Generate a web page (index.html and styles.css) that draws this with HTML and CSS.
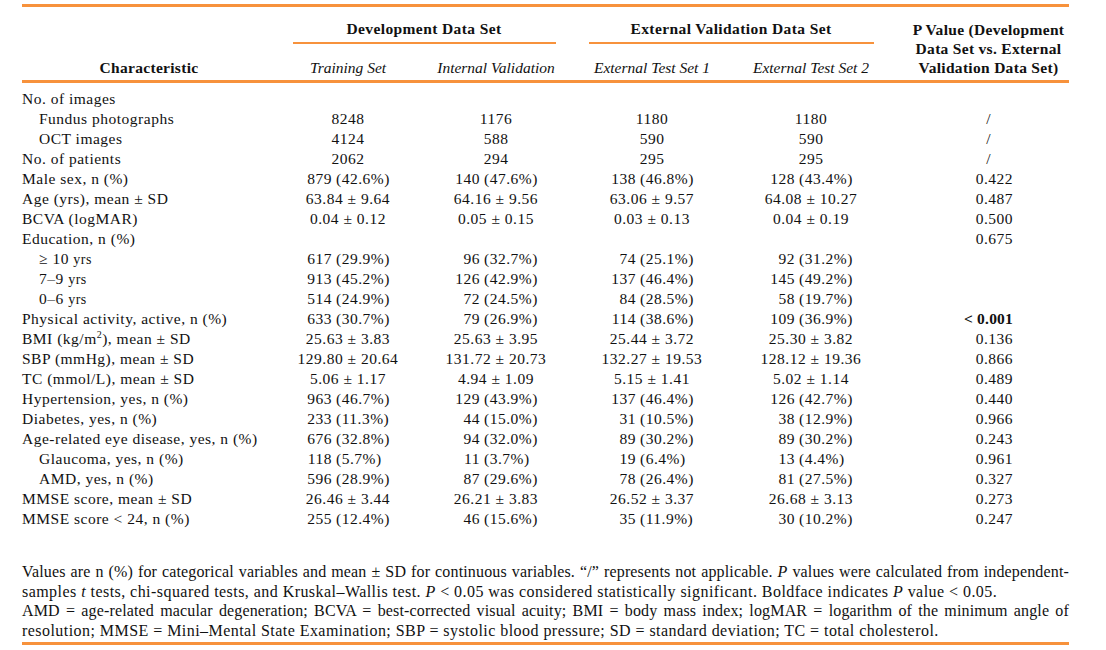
FILE: index.html
```html
<!DOCTYPE html>
<html lang="en">
<head>
<meta charset="utf-8">
<title>Table</title>
<link rel="stylesheet" href="styles.css">
</head>
<body>
<div class="page">
  <div class="thead">
    <div class="h-char">Characteristic</div>
    <div class="h-group g-dev"><div class="h-title">Development Data Set</div><div class="h-rule"></div></div>
    <div class="h-group g-ext"><div class="h-title">External Validation Data Set</div><div class="h-rule"></div></div>
    <div class="h-p">P Value (Development<br>Data Set vs. External<br>Validation Data Set)</div>
    <div class="h-sub s1">Training Set</div>
    <div class="h-sub s2">Internal Validation</div>
    <div class="h-sub s3">External Test Set 1</div>
    <div class="h-sub s4">External Test Set 2</div>
  </div>

  <div class="tbody">
    <div class="row"><div class="lab">No. of images</div><div></div><div></div><div></div><div></div><div></div></div>
    <div class="row"><div class="lab ind">Fundus photographs</div><div class="c">8248</div><div class="c">1176</div><div class="c">1180</div><div class="c">1180</div><div class="na">/</div></div>
    <div class="row"><div class="lab ind">OCT images</div><div class="c">4124</div><div class="c">588</div><div class="c">590</div><div class="c">590</div><div class="na">/</div></div>
    <div class="row"><div class="lab">No. of patients</div><div class="c">2062</div><div class="c">294</div><div class="c">295</div><div class="c">295</div><div class="na">/</div></div>
    <div class="row"><div class="lab">Male sex, n (%)</div>
      <div class="c"><span class="np"><span class="n">879</span><span class="p">(42.6%)</span></span></div>
      <div class="c"><span class="np"><span class="n">140</span><span class="p">(47.6%)</span></span></div>
      <div class="c"><span class="np"><span class="n">138</span><span class="p">(46.8%)</span></span></div>
      <div class="c"><span class="np"><span class="n">128</span><span class="p">(43.4%)</span></span></div>
      <div class="pv">0.422</div></div>
    <div class="row"><div class="lab">Age (yrs), mean ± SD</div><div class="c">63.84 ± 9.64</div><div class="c">64.16 ± 9.56</div><div class="c">63.06 ± 9.57</div><div class="c">64.08 ± 10.27</div><div class="pv">0.487</div></div>
    <div class="row"><div class="lab">BCVA (logMAR)</div><div class="c">0.04 ± 0.12</div><div class="c">0.05 ± 0.15</div><div class="c">0.03 ± 0.13</div><div class="c">0.04 ± 0.19</div><div class="pv">0.500</div></div>
    <div class="row"><div class="lab">Education, n (%)</div><div></div><div></div><div></div><div></div><div class="pv">0.675</div></div>
    <div class="row"><div class="lab ind">≥ 10 <span class="yrs">yrs</span></div>
      <div class="c"><span class="np"><span class="n">617</span><span class="p">(29.9%)</span></span></div>
      <div class="c"><span class="np"><span class="n">96</span><span class="p">(32.7%)</span></span></div>
      <div class="c"><span class="np"><span class="n">74</span><span class="p">(25.1%)</span></span></div>
      <div class="c"><span class="np"><span class="n">92</span><span class="p">(31.2%)</span></span></div>
      <div></div></div>
    <div class="row"><div class="lab ind">7–9 <span class="yrs">yrs</span></div>
      <div class="c"><span class="np"><span class="n">913</span><span class="p">(45.2%)</span></span></div>
      <div class="c"><span class="np"><span class="n">126</span><span class="p">(42.9%)</span></span></div>
      <div class="c"><span class="np"><span class="n">137</span><span class="p">(46.4%)</span></span></div>
      <div class="c"><span class="np"><span class="n">145</span><span class="p">(49.2%)</span></span></div>
      <div></div></div>
    <div class="row"><div class="lab ind">0–6 <span class="yrs">yrs</span></div>
      <div class="c"><span class="np"><span class="n">514</span><span class="p">(24.9%)</span></span></div>
      <div class="c"><span class="np"><span class="n">72</span><span class="p">(24.5%)</span></span></div>
      <div class="c"><span class="np"><span class="n">84</span><span class="p">(28.5%)</span></span></div>
      <div class="c"><span class="np"><span class="n">58</span><span class="p">(19.7%)</span></span></div>
      <div></div></div>
    <div class="row"><div class="lab">Physical activity, active, n (%)</div>
      <div class="c"><span class="np"><span class="n">633</span><span class="p">(30.7%)</span></span></div>
      <div class="c"><span class="np"><span class="n">79</span><span class="p">(26.9%)</span></span></div>
      <div class="c"><span class="np"><span class="n">114</span><span class="p">(38.6%)</span></span></div>
      <div class="c"><span class="np"><span class="n">109</span><span class="p">(36.9%)</span></span></div>
      <div class="pv sig">&lt; 0.001</div></div>
    <div class="row"><div class="lab">BMI (kg/m<sup>2</sup>), mean ± SD</div><div class="c">25.63 ± 3.83</div><div class="c">25.63 ± 3.95</div><div class="c">25.44 ± 3.72</div><div class="c">25.30 ± 3.82</div><div class="pv">0.136</div></div>
    <div class="row"><div class="lab">SBP (mmHg), mean ± SD</div><div class="c">129.80 ± 20.64</div><div class="c">131.72 ± 20.73</div><div class="c">132.27 ± 19.53</div><div class="c">128.12 ± 19.36</div><div class="pv">0.866</div></div>
    <div class="row"><div class="lab">TC (mmol/L), mean ± SD</div><div class="c">5.06 ± 1.17</div><div class="c">4.94 ± 1.09</div><div class="c">5.15 ± 1.41</div><div class="c">5.02 ± 1.14</div><div class="pv">0.489</div></div>
    <div class="row"><div class="lab">Hypertension, yes, n (%)</div>
      <div class="c"><span class="np"><span class="n">963</span><span class="p">(46.7%)</span></span></div>
      <div class="c"><span class="np"><span class="n">129</span><span class="p">(43.9%)</span></span></div>
      <div class="c"><span class="np"><span class="n">137</span><span class="p">(46.4%)</span></span></div>
      <div class="c"><span class="np"><span class="n">126</span><span class="p">(42.7%)</span></span></div>
      <div class="pv">0.440</div></div>
    <div class="row"><div class="lab">Diabetes, yes, n (%)</div>
      <div class="c"><span class="np"><span class="n">233</span><span class="p">(11.3%)</span></span></div>
      <div class="c"><span class="np"><span class="n">44</span><span class="p">(15.0%)</span></span></div>
      <div class="c"><span class="np"><span class="n">31</span><span class="p">(10.5%)</span></span></div>
      <div class="c"><span class="np"><span class="n">38</span><span class="p">(12.9%)</span></span></div>
      <div class="pv">0.966</div></div>
    <div class="row"><div class="lab">Age-related eye disease, yes, n (%)</div>
      <div class="c"><span class="np"><span class="n">676</span><span class="p">(32.8%)</span></span></div>
      <div class="c"><span class="np"><span class="n">94</span><span class="p">(32.0%)</span></span></div>
      <div class="c"><span class="np"><span class="n">89</span><span class="p">(30.2%)</span></span></div>
      <div class="c"><span class="np"><span class="n">89</span><span class="p">(30.2%)</span></span></div>
      <div class="pv">0.243</div></div>
    <div class="row"><div class="lab ind">Glaucoma, yes, n (%)</div>
      <div class="c"><span class="np"><span class="n">118</span><span class="p">(5.7%)</span></span></div>
      <div class="c"><span class="np"><span class="n">11</span><span class="p">(3.7%)</span></span></div>
      <div class="c"><span class="np"><span class="n">19</span><span class="p">(6.4%)</span></span></div>
      <div class="c"><span class="np"><span class="n">13</span><span class="p">(4.4%)</span></span></div>
      <div class="pv">0.961</div></div>
    <div class="row"><div class="lab ind">AMD, yes, n (%)</div>
      <div class="c"><span class="np"><span class="n">596</span><span class="p">(28.9%)</span></span></div>
      <div class="c"><span class="np"><span class="n">87</span><span class="p">(29.6%)</span></span></div>
      <div class="c"><span class="np"><span class="n">78</span><span class="p">(26.4%)</span></span></div>
      <div class="c"><span class="np"><span class="n">81</span><span class="p">(27.5%)</span></span></div>
      <div class="pv">0.327</div></div>
    <div class="row"><div class="lab">MMSE score, mean ± SD</div><div class="c">26.46 ± 3.44</div><div class="c">26.21 ± 3.83</div><div class="c">26.52 ± 3.37</div><div class="c">26.68 ± 3.13</div><div class="pv">0.273</div></div>
    <div class="row"><div class="lab">MMSE score &lt; 24, n (%)</div>
      <div class="c"><span class="np"><span class="n">255</span><span class="p">(12.4%)</span></span></div>
      <div class="c"><span class="np"><span class="n">46</span><span class="p">(15.6%)</span></span></div>
      <div class="c"><span class="np"><span class="n">35</span><span class="p">(11.9%)</span></span></div>
      <div class="c"><span class="np"><span class="n">30</span><span class="p">(10.2%)</span></span></div>
      <div class="pv">0.247</div></div>
  </div>

  <div class="notes">
    <div class="line full">Values are n (%) for categorical variables and mean ± SD for continuous variables. “/” represents not applicable. <i>P</i> values were calculated from independent-</div>
    <div class="line">samples <i>t</i> tests, chi-squared tests, and Kruskal–Wallis test. <i>P</i> &lt; 0.05 was considered statistically significant. Boldface indicates <i>P</i> value &lt; 0.05.</div>
    <div class="line full">AMD = age-related macular degeneration; BCVA = best-corrected visual acuity; BMI = body mass index; logMAR = logarithm of the minimum angle of</div>
    <div class="line">resolution; MMSE = Mini–Mental State Examination; SBP = systolic blood pressure; SD = standard deviation; TC = total cholesterol.</div>
  </div>
</div>
</body>
</html>
```

FILE: styles.css
```css
html, body {
  margin: 0;
  padding: 0;
  background: #ffffff;
}

body {
  font-family: "Liberation Serif", "Times New Roman", serif;
  font-size: 15.5px;
  letter-spacing: 0.5px;
  color: #111111;
}

.page {
  width: 1047px;
  padding: 4px 0 0 22px;
}

/* ---------- header ---------- */
.thead {
  display: grid;
  grid-template-columns: 254px 144px 152px 160px 158px 179px;
  grid-template-rows: 37px 36px;
  border-top: 3px solid #f7923c;
  border-bottom: 3px solid #f7923c;
  font-weight: bold;
  line-height: 19px;
}

.h-char {
  grid-column: 1;
  grid-row: 1 / 3;
  align-self: end;
  padding-bottom: 3px;
  text-align: center;
  letter-spacing: 0.3px;
}

.h-group {
  grid-row: 1;
  padding-top: 12px;
  text-align: center;
  letter-spacing: 0.4px;
}

.g-dev { grid-column: 2 / 4; }
.g-ext { grid-column: 4 / 6; }

.h-rule {
  height: 2px;
  margin: 4px 16px 0 17px;
  background: #f7923c;
}

.h-p {
  grid-column: 6;
  grid-row: 1 / 3;
  align-self: end;
  margin-right: -10px;
  padding: 0 0 3px 8px;
  text-align: center;
  letter-spacing: 0.3px;
  white-space: nowrap;
}

.h-sub {
  grid-row: 2;
  padding-top: 14px;
  text-align: center;
  font-weight: normal;
  font-style: italic;
  letter-spacing: 0;
}

.s1 { grid-column: 2; }
.s2 { grid-column: 3; }
.s3 { grid-column: 4; }
.s4 { grid-column: 5; }

/* ---------- body ---------- */
.tbody {
  padding-top: 6px;
}

.row {
  display: grid;
  grid-template-columns: 254px 144px 152px 160px 158px 179px;
  line-height: 20px;
  height: 20px;
  white-space: nowrap;
}

.lab { text-align: left; }
.ind { padding-left: 17px; }

.yrs { font-size: 14px; }

sup {
  font-size: 10px;
  line-height: 0;
  vertical-align: 6px;
}

.c { text-align: center; }

.np {
  display: inline-flex;
  justify-content: flex-start;
}

.n {
  width: 28px;
  text-align: right;
}

.p {
  width: 56px;
  margin-left: 4px;
  text-align: left;
}

.pv {
  text-align: right;
  padding-right: 56px;
}

.pv.sig {
  font-weight: bold;
  letter-spacing: 0.2px;
}

.na {
  text-align: right;
  padding-right: 78px;
}

/* ---------- notes ---------- */
.notes {
  margin-top: 33px;
  padding-bottom: 1px;
  border-bottom: 3px solid #f7923c;
  font-size: 16px;
  line-height: 19.7px;
  letter-spacing: 0.45px;
}

.line {
  white-space: nowrap;
  text-align: left;
}

.line.full {
  letter-spacing: 0.15px;
  text-align: justify;
  text-align-last: justify;
}
```
